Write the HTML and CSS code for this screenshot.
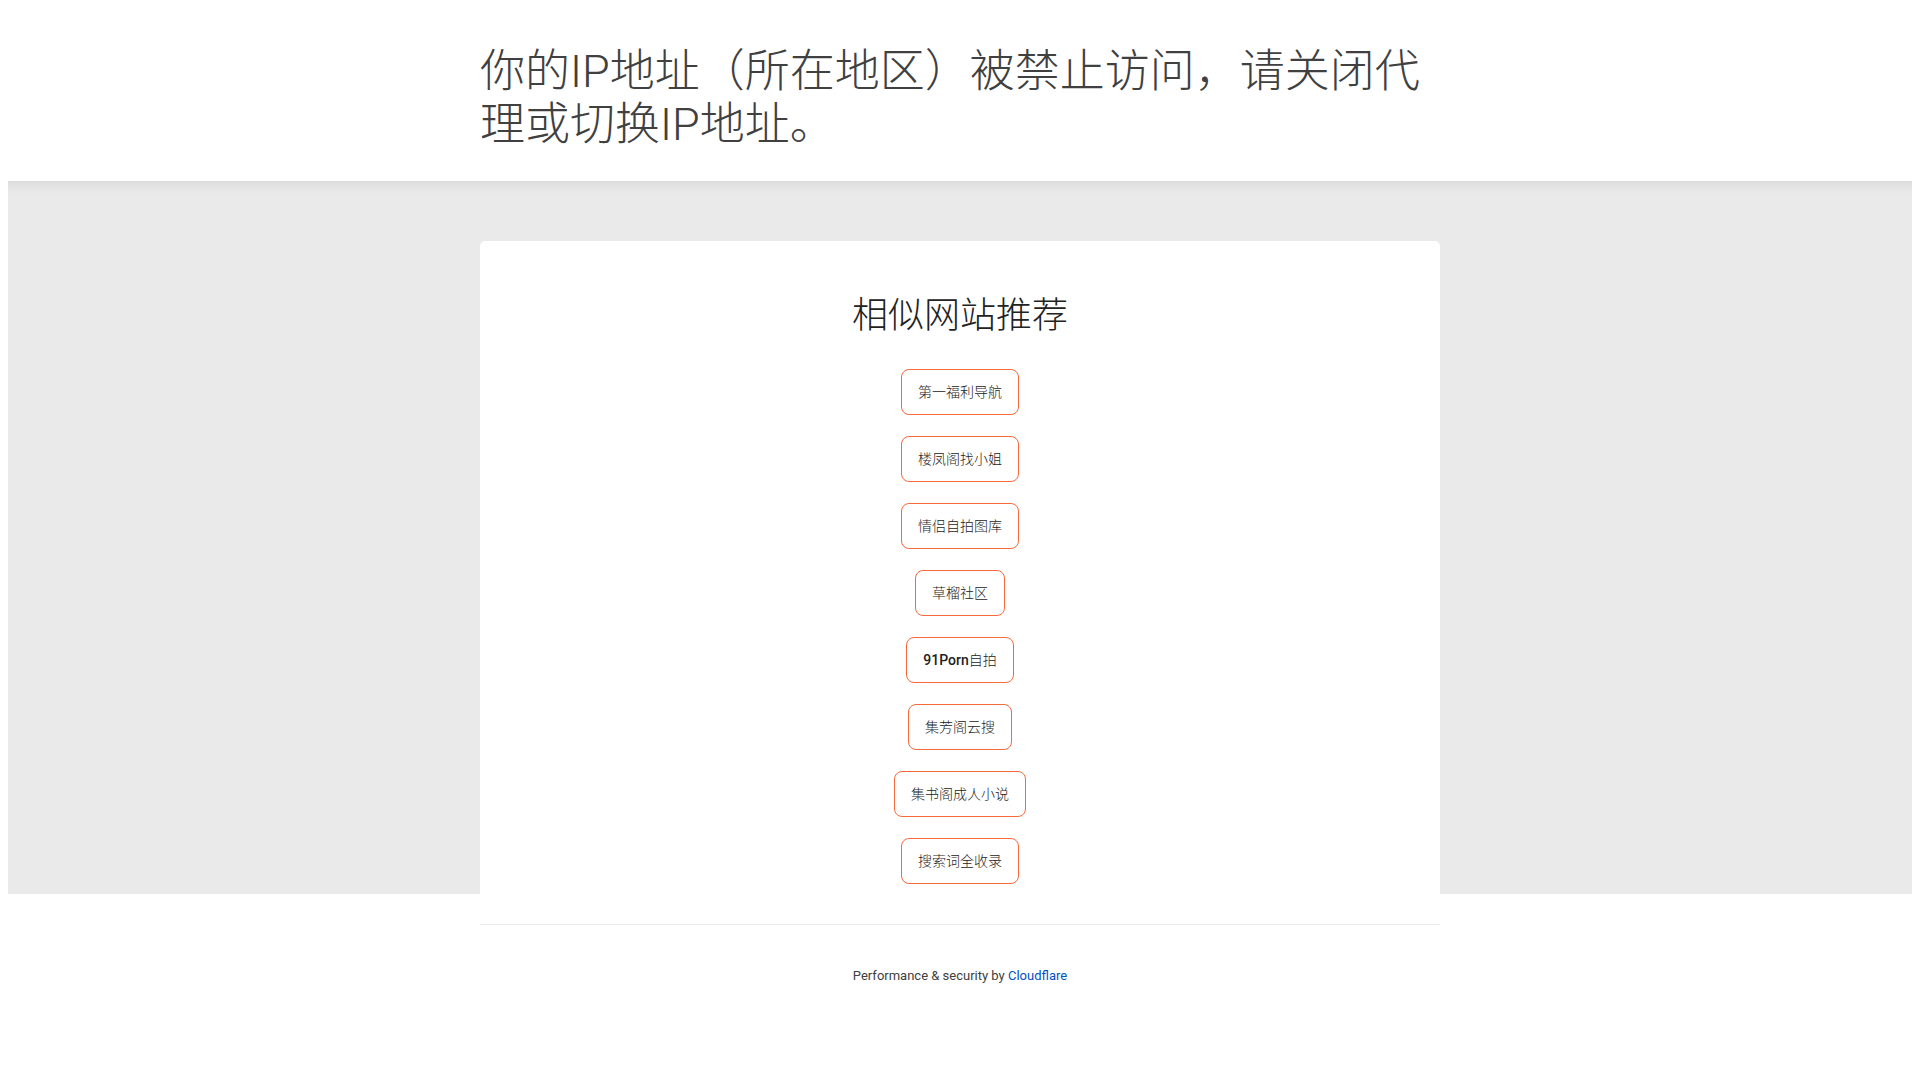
FILE: index.html
```html
<!DOCTYPE html>
<html lang="zh-CN">
<head>
<meta charset="utf-8">
<title>Access denied</title>
<link rel="stylesheet" href="styles.css">
</head>
<body>
  <header class="page-header">
    <div class="wrapper">
      <h1 class="title">你的IP地址（所在地区）被禁止访问，请关闭代理或切换IP地址。</h1>
    </div>
  </header>
  <section class="band">
    <div class="wrapper card">
      <h2 class="card-title">相似网站推荐</h2>
      <ul class="links">
        <li><a class="link-btn" href="#">第一福利导航</a></li>
        <li><a class="link-btn" href="#">楼凤阁找小姐</a></li>
        <li><a class="link-btn" href="#">情侣自拍图库</a></li>
        <li><a class="link-btn" href="#">草榴社区</a></li>
        <li><a class="link-btn" href="#"><span class="latin">91Porn</span>自拍</a></li>
        <li><a class="link-btn" href="#">集芳阁云搜</a></li>
        <li><a class="link-btn" href="#">集书阁成人小说</a></li>
        <li><a class="link-btn" href="#">搜索词全收录</a></li>
      </ul>
    </div>
  </section>
  <footer class="wrapper footer">
    <p>Performance &amp; security by <a href="#">Cloudflare</a></p>
  </footer>
</body>
</html>
```

FILE: styles.css
```css
html, body {
  background: #fff;
}
body {
  margin: 8px;
  font-family: Roboto, "Noto Sans CJK SC", "Liberation Sans", sans-serif;
  color: #404040;
  text-spacing-trim: space-all;
}
.wrapper {
  width: 960px;
  margin: 0 auto;
  box-sizing: border-box;
}
.page-header {
  padding: 37px 0 30px;
}
.title {
  margin: 0;
  font-size: 45px;
  line-height: 53px;
  font-weight: 300;
  color: #404040;
}
.band {
  display: flow-root;
  background: #eaeaea;
  box-shadow: inset 0 14px 12px -10px rgba(0, 0, 0, 0.07);
  padding-top: 60px;
}
.card {
  background: #fff;
  border-radius: 5px 5px 0 0;
  padding: 53px 0 40px;
  margin-bottom: -30px;
  text-align: center;
  position: relative;
}
.card-title {
  margin: 0 0 31px;
  font-size: 36px;
  line-height: 44px;
  font-weight: 300;
  color: #222;
}
.links {
  list-style: none;
  margin: 0;
  padding: 0;
  display: flex;
  flex-direction: column;
  align-items: center;
  gap: 21px;
}
.link-btn {
  display: inline-block;
  padding: 12px 16px;
  line-height: 20px;
  font-size: 14px;
  font-weight: 300;
  color: #222;
  text-decoration: none;
  border: 1px solid #f7693a;
  border-radius: 8px;
}
.latin {
  font-weight: 500;
}
.footer {
  margin-top: 30px;
  border-top: 1px solid #eaeaea;
  padding-top: 42px;
  text-align: center;
}
.footer p {
  margin: 0;
  font-size: 13px;
  line-height: 18px;
  color: #404040;
}
.footer a {
  color: #0051c3;
  text-decoration: none;
}
```
